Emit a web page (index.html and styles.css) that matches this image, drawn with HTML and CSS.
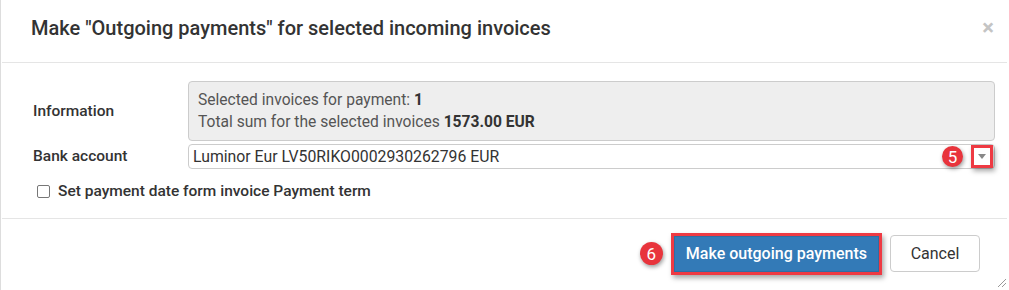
FILE: index.html
```html
<!DOCTYPE html>
<html>
<head>
<meta charset="utf-8">
<link rel="stylesheet" href="styles.css">
</head>
<body>
<div class="modal">
  <div class="modal-header">
    <h4 class="modal-title">Make "Outgoing payments" for selected incoming invoices</h4>
    <span class="close">&times;</span>
  </div>
  <div class="modal-body">
    <div class="form-row info-row">
      <label class="form-label">Information</label>
      <div class="info-box">
        <div>Selected invoices for payment: <b>1</b></div>
        <div>Total sum for the selected invoices <b>1573.00 EUR</b></div>
      </div>
    </div>
    <div class="form-row select-row">
      <label class="form-label">Bank account</label>
      <div class="select">
        <span class="select-text">Luminor Eur LV50RIKO0002930262796 EUR</span>
        <span class="badge badge-5">5</span>
        <span class="select-arrow"><span class="caret"></span></span>
      </div>
    </div>
    <div class="check-row">
      <span class="checkbox"></span>
      <span class="check-label">Set payment date form invoice Payment term</span>
    </div>
  </div>
  <div class="modal-footer">
    <div class="primary-wrap">
      <span class="badge badge-6">6</span>
      <button class="btn btn-primary">Make outgoing payments</button>
    </div>
    <button class="btn btn-default">Cancel</button>
  </div>
  <svg class="resize" width="12" height="12" viewBox="0 0 12 12"><path d="M11 3 L3 11 M11 7 L7 11" stroke="#999" stroke-width="1" fill="none"/></svg>
</div>
</body>
</html>
```
FILE: styles.css
```css
* { box-sizing: border-box; }
html, body { margin: 0; padding: 0; background: #fff; }
body { font-family: Roboto, "Liberation Sans", sans-serif; color: #333; }

.modal {
  position: relative;
  width: 1009px;
  height: 290px;
  background: #fff;
  border-left: 1px solid #ddd;
}

.modal-header {
  height: 63px;
  display: flex;
  align-items: center;
  justify-content: space-between;
  padding: 0 13px 6px 29px;
  margin: 0 2px 0 1px;
  border-bottom: 1px solid #e5e5e5;
}
.modal-title {
  margin: 0;
  font-size: 20px;
  font-weight: 500;
  color: #333;
}
.close {
  font-size: 22px;
  font-weight: 700;
  color: #c4c4c4;
  line-height: 1;
}

.modal-body {
  height: 155px;
  padding: 18px 14px 0 32px;
}
.form-row {
  display: grid;
  grid-template-columns: 155px 1fr;
  align-items: center;
}
.form-label {
  font-size: 15.5px;
  font-weight: 500;
  color: #333;
}
.info-box {
  height: 60px;
  background: #eee;
  border: 1px solid #ccc;
  border-radius: 4px;
  padding: 7px 9px;
  font-size: 15.6px;
  line-height: 22px;
  color: #555;
}
.info-box b { color: #333; font-weight: 700; }

.select-row { margin-top: 3px; align-items: start; }
.select-row .form-label { padding-top: 3px; }
.select {
  position: relative;
  height: 25px;
  display: flex;
  align-items: center;
  border: 1px solid #ccc;
  border-radius: 4px;
  padding-left: 4px;
  font-size: 15.8px;
  color: #333;
}
.select-text { flex: 1; }
.select-arrow {
  width: 22px;
  height: 23px;
  display: flex;
  align-items: center;
  justify-content: center;
  border: 3px solid #ee3a43;
  box-shadow: 2px 3px 5px rgba(0,0,0,0.35);
  background: #fff;
  margin-right: 1px;
}
.caret {
  width: 0; height: 0;
  border-left: 4px solid transparent;
  border-right: 4px solid transparent;
  border-top: 5px solid #888;
}

.badge {
  display: inline-flex;
  align-items: center;
  justify-content: center;
  border-radius: 50%;
  background: #e8343c;
  color: #fff;
  font-size: 17px;
  box-shadow: 1px 2px 4px rgba(0,0,0,0.4);
}
.badge-5 { width: 21px; height: 21px; margin-right: 8px; }
.badge-6 { width: 23px; height: 23px; margin-right: 8px; }

.check-row {
  display: flex;
  align-items: center;
  margin-top: 13px;
  padding-left: 4px;
}
.checkbox {
  width: 13px;
  height: 13px;
  border: 1px solid #777;
  border-radius: 2px;
  margin-right: 8px;
}
.check-label { font-size: 15.5px; font-weight: 500; color: #333; }

.modal-footer {
  height: 72px;
  border-top: 1px solid #e5e5e5;
  margin: 0 2px 0 1px;
  display: flex;
  align-items: center;
  justify-content: flex-end;
  padding: 0 27px 2px 0;
  gap: 8px;
}
.primary-wrap { display: flex; align-items: center; }
.btn {
  font-family: Roboto, "Liberation Sans", sans-serif;
  font-size: 16px;
  border-radius: 4px;
  cursor: pointer;
}
.btn-primary {
  height: 42px;
  padding: 0 12px;
  background: #337ab7;
  color: #fff;
  font-weight: 500;
  border: 3px solid #ee3a43;
  border-radius: 0;
  box-shadow: inset 0 0 0 1px #2e6da4, 2px 3px 5px rgba(0,0,0,0.35);
}
.btn-default {
  height: 37px;
  width: 90px;
  background: #fff;
  color: #333;
  border: 1px solid #ccc;
}

.resize { position: absolute; right: 2px; bottom: 2px; }
```
